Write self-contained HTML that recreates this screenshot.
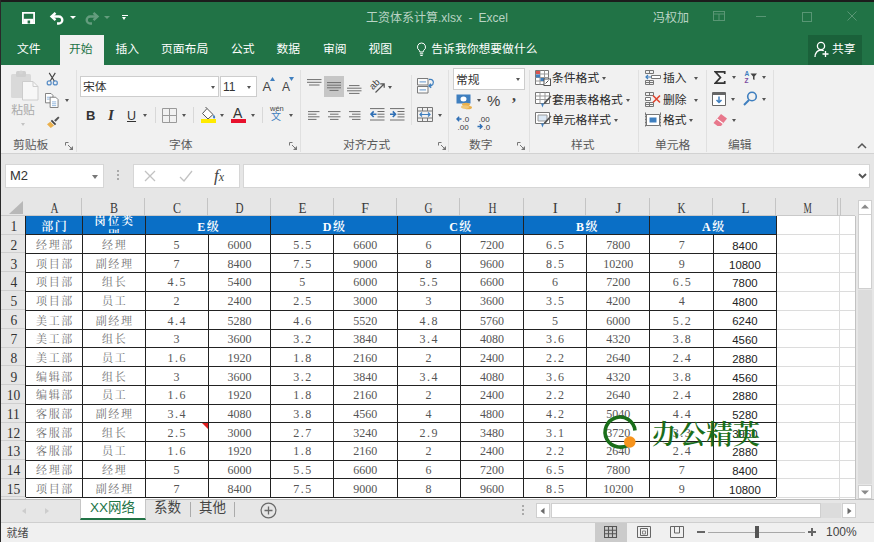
<!DOCTYPE html>
<html lang="zh-CN">
<head>
<meta charset="utf-8">
<title>工资体系计算.xlsx - Excel</title>
<style>
html,body{margin:0;padding:0;}
body{width:874px;height:542px;overflow:hidden;position:relative;background:#e6e6e6;font-family:"Liberation Sans","Noto Sans CJK SC",sans-serif;font-size:12px;color:#444;}
div,span,svg{position:absolute;box-sizing:border-box;}
.t{white-space:nowrap;line-height:14px;height:14px;}
/* title */
#title{left:0;top:0;width:874px;height:65px;background:#217346;}
#topb{left:0;top:0;width:874px;height:1.5px;background:#1c1c1c;}
#leftb{left:0;top:0;width:1px;height:542px;background:#2a2a2a;}
.w{color:#fff;}
.tab{top:42px;font-size:11.8px;color:#fff;}
#acttab{left:59.5px;top:35px;width:44.5px;height:31px;background:#f1f1f1;}
#share{left:808px;top:35px;width:54px;height:30px;background:#1a613a;}
/* ribbon */
#ribbon{left:1px;top:65px;width:873px;height:88.5px;background:#f1f1f1;border-bottom:1px solid #d2d2d2;}
.gs{top:70px;width:1px;height:82px;background:#e0e0e0;}
.ss{width:1px;height:16px;background:#d8d8d8;}
.gl2{top:137.5px;font-size:11.8px;color:#5a5a5a;}
.rt{font-size:11.8px;color:#2a2a2a;}
.box{background:#fff;border:1px solid #cdcdcd;height:21px;top:75.5px;}
.arr{width:0;height:0;border-left:2.5px solid transparent;border-right:2.5px solid transparent;border-top:3px solid #555;}
/* formula */
.fb{background:#fff;border:1px solid #d6d6d6;top:163.5px;height:24.5px;}
/* grid */
#sheet{left:1px;top:198px;width:853.5px;height:301px;background:#fff;}
#chbar{left:1px;top:198px;width:853.5px;height:17.7px;background:#e6e6e6;border-bottom:1px solid #c9c9c9;}
#rhbar{left:1px;top:215.7px;width:24.7px;height:283.3px;background:#e6e6e6;border-right:1px solid #c9c9c9;}
.ch{top:198px;height:18px;line-height:21px;padding-left:1.5px;text-align:center;font-family:"Liberation Serif","Noto Serif CJK SC",serif;font-size:15px;color:#3a3a3a;border-right:1px solid #c4c4c4;}
.ch b,.rh b{position:static;display:inline-block;font-weight:normal;transform:scaleX(.8);}
.rh b{transform:scaleX(.9);}
.c i{position:static;font-style:normal;padding:0 1.5px;}
.rh{left:1px;width:24.7px;text-align:center;font-family:"Liberation Serif","Noto Serif CJK SC",serif;font-size:15px;color:#333;border-bottom:1px solid #cfcfcf;}
.blue{background:#0a6fc6;}
.hd{color:#fff;font-weight:600;text-align:center;font-family:"Liberation Serif","Noto Serif CJK SC",serif;font-size:12px;overflow:hidden;letter-spacing:1.5px;padding-left:1.5px;}
.hd2{line-height:14px;margin-top:-2px;font-size:11.5px;letter-spacing:2.2px;padding-left:2.2px;}
.c{text-align:center;font-family:"Liberation Serif","Noto Serif CJK SC",serif;font-size:12px;color:#555;white-space:nowrap;}
.c.k{font-size:11px;color:#707070;letter-spacing:1.6px;padding-left:2px;}
.c.s{font-family:"Liberation Sans",sans-serif;color:#222;font-size:11.4px;letter-spacing:0;}
.vl{width:1px;background:#222;}
.hl{height:1px;background:#222;}
.gl{background:#dcdcdc;}
/* bottom */
#tabbar{left:1px;top:499px;width:873px;height:24px;background:#e6e6e6;border-top:1px solid #bdbdbd;border-bottom:1px solid #cfcfcf;}
#status{left:1px;top:523px;width:873px;height:19px;background:#f0f0f0;}
</style>
</head>
<body>
<div id="title"></div>
<div id="acttab"></div>
<div id="share"></div>
<div id="topb"></div>

<!-- quick access icons -->
<svg style="left:22px;top:12px" width="13" height="12" viewBox="0 0 13 12"><path d="M0.9 0.9h11.200v10.200h-11.200z" fill="none" stroke="#fff" stroke-width="1.800"/><rect x="1.500" y="6.800" width="10" height="4.500" fill="#fff"/><rect x="5.600" y="8.500" width="2.500" height="3" fill="#217346"/></svg>
<svg style="left:49px;top:10.500px" width="17" height="14" viewBox="0 0 17 14"><path d="M6.500 1.800 L2.500 5.500 L6.500 9.200" fill="none" stroke="#fff" stroke-width="2.400"/><path d="M3 5.500 H9.800 a3.500 3.500 0 0 1 0 7 H8" fill="none" stroke="#fff" stroke-width="2.400"/></svg>
<div class="arr" style="left:70px;top:16px;border-top-color:#fff;border-left-width:3px;border-right-width:3px"></div>
<svg style="left:83px;top:10.500px;opacity:.3" width="17" height="14" viewBox="0 0 17 14"><path d="M10.500 1.800 L14.500 5.500 L10.500 9.200" fill="none" stroke="#fff" stroke-width="2.400"/><path d="M14 5.500 H7.200 a3.500 3.500 0 0 0 0 7 H9" fill="none" stroke="#fff" stroke-width="2.400"/></svg>
<div class="arr" style="left:104px;top:16px;border-top-color:#fff;opacity:.3;border-left-width:3px;border-right-width:3px"></div>
<div style="left:122px;top:14.500px;width:5.500px;height:1.300px;background:#fff"></div>
<div class="arr" style="left:122.200px;top:17px;border-top-color:#fff"></div>

<!-- title text -->
<div class="t w" style="left:366px;top:10.5px;font-size:12px;color:#b9d3c4">工资体系计算.xlsx</div>
<div class="t w" style="left:468.5px;top:10.5px;font-size:12px;color:#b9d3c4">-</div>
<div class="t w" style="left:478.5px;top:10.5px;font-size:12px;color:#b9d3c4">Excel</div>
<div class="t w" style="left:653px;top:10.5px;font-size:12px;color:#b9d3c4">冯权加</div>
<svg style="left:713px;top:11px;opacity:.25" width="12" height="10" viewBox="0 0 12 10"><rect x=".5" y=".5" width="11" height="9" fill="none" stroke="#fff"/><path d="M.5 3h11M6 3v6" stroke="#fff" fill="none"/></svg>
<div style="left:756px;top:16px;width:10px;height:1px;background:#fff;opacity:.25"></div>
<div style="left:802px;top:11.5px;width:10px;height:10px;border:1px solid #fff;opacity:.25"></div>
<svg style="left:847px;top:11px;opacity:.25" width="10" height="10" viewBox="0 0 10 10"><path d="M.5 .5l9 9M9.5 .5l-9 9" stroke="#fff" fill="none"/></svg>

<!-- tabs -->
<div class="t tab" style="left:17px">文件</div>
<div class="t tab" style="left:69px;color:#217346">开始</div>
<div class="t tab" style="left:115.5px">插入</div>
<div class="t tab" style="left:161px">页面布局</div>
<div class="t tab" style="left:231px">公式</div>
<div class="t tab" style="left:276.5px">数据</div>
<div class="t tab" style="left:323px">审阅</div>
<div class="t tab" style="left:368.5px">视图</div>
<svg style="left:416px;top:41.5px" width="11" height="16" viewBox="0 0 11 16"><path d="M5.5 1a4 4 0 0 0-2.3 7.3c.4.4.6 1 .6 1.700h3.400c0-.7.200-1.300.6-1.700A4 4 0 0 0 5.500 1z" fill="none" stroke="#fff" stroke-width="1"/><path d="M3.800 11.800h3.400M4.300 13.500h2.400" stroke="#fff" stroke-width="1"/></svg>
<div class="t tab" style="left:431.3px">告诉我你想要做什么</div>
<svg style="left:814px;top:41px" width="16" height="17" viewBox="0 0 16 17"><circle cx="7" cy="5" r="3.600" fill="none" stroke="#fff" stroke-width="1.300"/><path d="M1 16c0-4 2.500-7 6-7 1 0 2 .3 2.700.8" fill="none" stroke="#fff" stroke-width="1.300"/><path d="M11.500 10v6M8.500 13h6" stroke="#fff" stroke-width="1.300"/></svg>
<div class="t tab" style="left:832px">共享</div>

<!-- ribbon -->
<div id="ribbon"></div>
<!-- clipboard group -->
<svg style="left:9px;top:69px" width="31" height="32" viewBox="0 0 31 32"><rect x="2" y="5" width="20" height="24" rx="1.500" fill="#d9d9d9"/><rect x="7" y="2" width="10" height="6" rx="1.500" fill="#cfcfcf"/><circle cx="12" cy="3.500" r="2" fill="#d4d4d4"/><path d="M13.500 12.500h10.500l5 5v13.500h-15.500z" fill="#f7f7f7" stroke="#cdcdcd" stroke-width="1"/><path d="M24 12.500v5h5" fill="none" stroke="#cdcdcd"/></svg>
<div class="t" style="left:11.300px;top:103px;font-size:11.800px;color:#aaa">粘贴</div>
<div class="arr" style="left:21px;top:123px;border-top-color:#c4c4c4"></div>
<svg style="left:45.500px;top:71.500px" width="12.500" height="14" viewBox="0 0 14 16"><path d="M3.500 1l6 9.500M10.500 1l-6 9.500" stroke="#444" stroke-width="1.300" fill="none"/><circle cx="3.500" cy="12.500" r="2.300" fill="none" stroke="#5b8fc7" stroke-width="1.400"/><circle cx="10.500" cy="12.500" r="2.300" fill="none" stroke="#5b8fc7" stroke-width="1.400"/></svg>
<svg style="left:45px;top:93px" width="14" height="15" viewBox="0 0 15 16"><path d="M.5 .5h6l2 2v8h-8z" fill="#fff" stroke="#7a7a7a"/><path d="M2 4.500h4M2 6.500h3" stroke="#8fb4dc"/><path d="M5.500 4.500h6l2.500 2.500v8.500h-8.500z" fill="#fff" stroke="#7a7a7a"/><path d="M7.500 9.500h4.500M7.500 11.500h4.500M7.500 13.500h4.500" stroke="#8fb4dc"/></svg>
<div class="arr" style="left:65px;top:99px"></div>
<svg style="left:45.500px;top:116px" width="14.500" height="12.500" viewBox="0 0 16 15"><path d="M9 5l5-4.500 1.500 1.500-4.500 5z" fill="#555"/><path d="M6.500 4.500l5 5-1.500 1.500-5-5z" fill="#444"/><path d="M4.500 7l4.500 4.500-4 3-4.500-4.500z" fill="#eab04c"/></svg>
<div class="t gl2" style="left:13px">剪贴板</div>
<svg class="ln" style="left:65px;top:142px" width="8" height="8" viewBox="0 0 8 8"><path d="M.5 3.500V.5H3.500M3 3l3.500 3.500" fill="none" stroke="#777" stroke-width="1"/><path d="M8 4v4H4z" fill="#777"/></svg>
<div class="gs" style="left:76px"></div>

<!-- font group -->
<div class="box" style="left:80px;width:139px"></div>
<div class="t" style="left:83px;top:80px;font-size:11.800px;color:#333">宋体</div>
<div class="arr" style="left:211px;top:86px"></div>
<div class="box" style="left:220px;width:37px"></div>
<div class="t" style="left:223px;top:80px;font-size:12px;color:#333">11</div>
<div class="arr" style="left:247px;top:86px"></div>
<div class="t" style="left:262.500px;top:78.500px;font-size:13px;color:#444;height:16px;line-height:16px">A</div>
<svg style="left:270px;top:77px" width="5" height="4" viewBox="0 0 5 4"><path d="M0 4l2.500-4 2.500 4z" fill="#3f7fbf"/></svg>
<div class="t" style="left:282px;top:80px;font-size:12px;color:#444">A</div>
<svg style="left:289px;top:77px" width="5" height="4" viewBox="0 0 5 4"><path d="M0 0l2.500 4 2.500-4z" fill="#3f7fbf"/></svg>
<div class="t" style="left:86px;top:108px;font-size:13px;font-weight:bold;color:#333;height:16px;line-height:16px">B</div>
<div class="t" style="left:108px;top:108px;font-size:15px;font-style:italic;font-weight:bold;color:#333;height:16px;line-height:15px;font-family:'Liberation Serif',serif">I</div>
<div class="t" style="left:127px;top:108px;font-size:12.500px;color:#333;height:16px;line-height:16px;text-decoration:underline">U</div>
<div class="arr" style="left:142.500px;top:114px"></div>
<div class="ss" style="left:155px;top:107px"></div>
<svg style="left:162px;top:108px" width="15" height="15" viewBox="0 0 15 15"><path d="M.5 .5h14v14H.5zM7.500 .5v14M.5 7.500h14" fill="none" stroke="#9a9a9a" stroke-width="1"/></svg>
<div class="arr" style="left:182px;top:114px"></div>
<div class="ss" style="left:193px;top:107px"></div>
<svg style="left:200px;top:106px" width="18" height="18" viewBox="0 0 18 18"><path d="M7 2.500l6 6-5 4.500-5.500-5.500z" fill="#fff" stroke="#555" stroke-width="1"/><path d="M7 2.500l-1.500-1.500" stroke="#555"/><path d="M13.500 8.500c1.500 1.500 2 2.500 1.500 3.500s-2 .5-2-1z" fill="#3f7fbf"/><rect x="1" y="13" width="15" height="4" fill="#ffeb00"/></svg>
<div class="arr" style="left:219.500px;top:114px"></div>
<div class="t" style="left:233px;top:105px;font-size:14px;color:#333;height:16px;line-height:16px">A</div>
<div style="left:231px;top:119px;width:15px;height:4px;background:#e8112d"></div>
<div class="arr" style="left:250.500px;top:114px"></div>
<div class="ss" style="left:262px;top:107px"></div>
<div class="t" style="left:270px;top:104px;font-size:7.500px;color:#444;height:9px;line-height:9px">wén</div>
<div class="t" style="left:271px;top:111px;font-size:10px;color:#3f7fbf;height:12px;line-height:12px">文</div>
<div class="arr" style="left:288.500px;top:114px"></div>
<div class="t gl2" style="left:169px">字体</div>
<svg style="left:289px;top:142px" width="8" height="8" viewBox="0 0 8 8"><path d="M.5 3.500V.5H3.500M3 3l3.500 3.500" fill="none" stroke="#777" stroke-width="1"/><path d="M8 4v4H4z" fill="#777"/></svg>
<div class="gs" style="left:300px"></div>

<!-- alignment group -->
<svg style="left:306.500px;top:78.500px" width="15" height="8" viewBox="0 0 15 8"><path d="M0 .6h14.500M0 3.300h14.500M2 6h10.500" stroke="#6e6e6e" stroke-width="1"/></svg>
<div style="left:324px;top:75.500px;width:20px;height:21px;background:#c6c6c6"></div>
<svg style="left:327px;top:82px" width="14" height="10" viewBox="0 0 14 10"><path d="M0 .6h14M0 3.200h14M0 5.800h14M2.500 8.400h9" stroke="#6e6e6e" stroke-width="1"/></svg>
<svg style="left:347px;top:85px" width="15" height="9" viewBox="0 0 15 9"><path d="M2 .6h10.500M0 3.200h14.500M0 5.800h14.500M2 8.400h10.500" stroke="#6e6e6e" stroke-width="1"/></svg>
<svg style="left:369px;top:77px" width="17" height="17" viewBox="0 0 17 17"><text x="0" y="0" font-size="9.500" font-family="'Liberation Sans',sans-serif" fill="#3a3a3a" transform="translate(4 13.200) rotate(-45)">ab</text><path d="M6.500 15.500l8.500-8.500M11.200 6.800h4v4" stroke="#555" stroke-width="1.200" fill="none"/></svg>
<div class="arr" style="left:388px;top:85.500px"></div>
<svg style="left:307.500px;top:110.500px" width="12" height="10" viewBox="0 0 12 10"><path d="M0 .6h11.500M0 3.200h8.500M0 5.800h11.500M0 8.400h8.500" stroke="#6e6e6e" stroke-width="1"/></svg>
<svg style="left:327.500px;top:110.500px" width="13" height="10" viewBox="0 0 13 10"><path d="M0 .6h12.500M2 3.200h8.500M0 5.800h12.500M2 8.400h8.500" stroke="#6e6e6e" stroke-width="1"/></svg>
<svg style="left:348.500px;top:110.500px" width="12" height="10" viewBox="0 0 12 10"><path d="M0 .6h11.500M3 3.200h8.500M0 5.800h11.500M3 8.400h8.500" stroke="#6e6e6e" stroke-width="1"/></svg>
<svg style="left:369.500px;top:108px" width="15" height="13" viewBox="0 0 15 13"><path d="M0 .6h14.500M7.500 3.500h7M7.500 6.200h7M7.500 8.900h7M0 12h14.500" stroke="#6e6e6e" stroke-width="1"/><path d="M6.500 6.200H1.200M3.700 3.400L1 6.200l2.700 2.800" stroke="#2f6fb5" stroke-width="1.600" fill="none"/></svg>
<svg style="left:390px;top:108px" width="15" height="13" viewBox="0 0 15 13"><path d="M0 .6h14.500M7.500 3.500h7M7.500 6.200h7M7.500 8.900h7M0 12h14.500" stroke="#6e6e6e" stroke-width="1"/><path d="M0 6.200h5.300M2.800 3.400l2.700 2.800-2.700 2.800" stroke="#2f6fb5" stroke-width="1.600" fill="none"/></svg>
<div class="ss" style="left:411px;top:75px;height:50px;background:#e0e0e0"></div>
<svg style="left:417px;top:78px" width="18" height="16" viewBox="0 0 18 16"><path d="M.5 .5h10.500v6.500H.5zM.5 8.500h10.500v6.500H.5z" fill="#fafafa" stroke="#7a7a7a"/><path d="M2.500 3.800h6.500M2.500 11.800h6.500" stroke="#7fa9d6" stroke-width="1.300"/><path d="M12 1.500c3.500-.8 5.500 2 3.800 4.800-.8 1.200-2 1.700-3.600 1.700M14 5.800l-2.200 2.200 2.400 1.800" stroke="#3f7fbf" stroke-width="1.300" fill="none"/></svg>
<svg style="left:417px;top:107px" width="16" height="15" viewBox="0 0 16 15"><path d="M.5 .5h15v14H.5zM.5 4h15M.5 11h15M5.500 .5v3.500M10.500 .5v3.500M5.500 11v3.500M10.500 11v3.500" fill="none" stroke="#777" stroke-width="1"/><path d="M3 7.500h10M5 5.500L3 7.500l2 2M11 5.500l2 2-2 2" stroke="#3f7fbf" stroke-width="1.200" fill="none"/></svg>
<div class="arr" style="left:437.500px;top:113.500px"></div>
<div class="t gl2" style="left:343px">对齐方式</div>
<svg style="left:438px;top:142px" width="8" height="8" viewBox="0 0 8 8"><path d="M.5 3.500V.5H3.500M3 3l3.500 3.500" fill="none" stroke="#777" stroke-width="1"/><path d="M8 4v4H4z" fill="#777"/></svg>
<div class="gs" style="left:448px"></div>

<!-- number group -->
<div class="box" style="left:453px;width:72px;top:68px;height:22px"></div>
<div class="t" style="left:456px;top:72.500px;font-size:11.800px;color:#333">常规</div>
<div class="arr" style="left:515.500px;top:78px"></div>
<svg style="left:455.5px;top:93.5px" width="18" height="16" viewBox="0 0 18 16"><rect x=".5" y=".5" width="14" height="9" fill="#3f7fbf"/><ellipse cx="7.500" cy="5" rx="3" ry="2.500" fill="#fff"/><ellipse cx="10" cy="10.500" rx="4" ry="1.800" fill="#eab04c"/><ellipse cx="12" cy="13.500" rx="4" ry="1.800" fill="#eab04c"/><ellipse cx="9" cy="13" rx="4" ry="1.800" fill="#f0c777"/></svg>
<div class="arr" style="left:477px;top:99px"></div>
<div class="t" style="left:487px;top:92px;font-size:15px;color:#444;height:17px;line-height:17px">%</div>
<div class="t" style="left:512px;top:86px;font-size:16px;font-weight:bold;color:#444;height:20px;line-height:20px;font-family:'Liberation Serif',serif">,</div>
<svg style="left:456px;top:115px" width="15" height="15" viewBox="0 0 15 15"><path d="M5.500 4H1M3.200 1.800L1 4l2.200 2.200" stroke="#2f6fb5" stroke-width="1.400" fill="none"/><text x="6.500" y="7" font-size="8" font-family="'Liberation Sans',sans-serif" fill="#3a3a3a">.0</text><text x="1.500" y="14.500" font-size="8" font-family="'Liberation Sans',sans-serif" fill="#3a3a3a">.00</text></svg>
<svg style="left:477px;top:115px" width="15" height="15" viewBox="0 0 15 15"><text x="1.500" y="7" font-size="8" font-family="'Liberation Sans',sans-serif" fill="#3a3a3a">.00</text><path d="M.5 11.500h4.500M2.800 9.300l2.200 2.200-2.200 2.200" stroke="#2f6fb5" stroke-width="1.400" fill="none"/><text x="6.500" y="14.500" font-size="8" font-family="'Liberation Sans',sans-serif" fill="#3a3a3a">.0</text></svg>
<div class="t gl2" style="left:469px">数字</div>
<svg style="left:517px;top:142px" width="8" height="8" viewBox="0 0 8 8"><path d="M.5 3.500V.5H3.500M3 3l3.500 3.500" fill="none" stroke="#777" stroke-width="1"/><path d="M8 4v4H4z" fill="#777"/></svg>
<div class="gs" style="left:529px"></div>

<!-- styles group -->
<svg style="left:535px;top:70px" width="16" height="16" viewBox="0 0 16 16"><path d="M.5 .5h13v14H.5z" fill="#fff" stroke="#777"/><path d="M.5 4h13M.5 7.500h13M.5 11h13M5 .5v14M9.500 .5v14" stroke="#999" fill="none"/><rect x="1" y="1" width="4" height="3" fill="#d9534f"/><rect x="1" y="4.500" width="4" height="3" fill="#3f7fbf"/><rect x="5.500" y="8" width="4" height="3" fill="#3f7fbf"/><rect x="9" y="9" width="6.500" height="6.500" fill="#fff" stroke="#555"/><path d="M10.500 13.500l3-3" stroke="#555"/></svg>
<div class="t rt" style="left:552px;top:71px">条件格式</div>
<div class="arr" style="left:602px;top:77px"></div>
<svg style="left:535px;top:92px" width="17" height="16" viewBox="0 0 17 16"><path d="M.5 .5h14v11H.5z" fill="#fff" stroke="#777"/><path d="M.5 4h14M.5 7.500h14M5 .5v11M10 .5v11" stroke="#999" fill="none"/><path d="M15.500 3.500l1 1-6 7-2 1 .5-2z" fill="#555"/><path d="M6 11.500l3 0 -1.500 4z" fill="#3f7fbf"/></svg>
<div class="t rt" style="left:552px;top:93px">套用表格格式</div>
<div class="arr" style="left:626px;top:99px"></div>
<svg style="left:535px;top:112px" width="17" height="16" viewBox="0 0 17 16"><path d="M.5 .5h14v11H.5z" fill="#fff" stroke="#777"/><path d="M3 3h9v6H3z" fill="#dbe8f5" stroke="#999"/><path d="M15.500 3.500l1 1-6 7-2 1 .5-2z" fill="#555"/><path d="M6 11.500l3 0 -1.500 4z" fill="#3f7fbf"/></svg>
<div class="t rt" style="left:552px;top:113px">单元格样式</div>
<div class="arr" style="left:614px;top:119px"></div>
<div class="t gl2" style="left:571px">样式</div>
<div class="gs" style="left:638px"></div>

<!-- cells group -->
<svg style="left:645px;top:70px" width="16" height="15" viewBox="0 0 16 15"><path d="M.5 .5h8v3h-8zM.5 10.500h8v4h-8zM4.500 .5v3M4.500 10.500v4M.5 12.500h8" fill="none" stroke="#777"/><path d="M6.500 5.500h9v3h-9z" fill="#fff" stroke="#777"/><path d="M6 7H1M3 5L1 7l2 2" stroke="#3f7fbf" stroke-width="1.200" fill="none"/></svg>
<div class="t rt" style="left:663px;top:71px">插入</div>
<div class="arr" style="left:694px;top:77px"></div>
<svg style="left:645px;top:92px" width="16" height="15" viewBox="0 0 16 15"><path d="M.5 .5h8v3h-8zM.5 10.500h8v4h-8zM4.500 .5v3M4.500 10.500v4M.5 12.500h8" fill="none" stroke="#777"/><path d="M.5 5.500h5v3h-5z" fill="#fff" stroke="#777"/><path d="M8 3.500l7 7M15 3.500l-7 7" stroke="#e0452f" stroke-width="1.600" fill="none"/></svg>
<div class="t rt" style="left:663px;top:93px">删除</div>
<div class="arr" style="left:694px;top:99px"></div>
<svg style="left:645px;top:112px" width="16" height="16" viewBox="0 0 16 16"><path d="M1.500 2.500h13v11h-13z" fill="#fff" stroke="#777"/><path d="M4.500 5.500h7v5h-7z" fill="#3f7fbf"/><path d="M.5 .5v15M15.500 .5v15M0 2.500h16M0 13.500h16" stroke="#777" fill="none" stroke-dasharray="2 1"/></svg>
<div class="t rt" style="left:663px;top:113px">格式</div>
<div class="arr" style="left:689px;top:119px"></div>
<div class="t gl2" style="left:655px">单元格</div>
<div class="gs" style="left:705.5px"></div>

<!-- editing group -->
<svg style="left:713.500px;top:71px" width="12" height="13" viewBox="0 0 14 15"><path d="M12.500 3.500V1H1.500l6 6.500-6 6.500h11v-2.500" fill="none" stroke="#333" stroke-width="2"/></svg>
<div class="arr" style="left:731.500px;top:76px"></div>
<svg style="left:743px;top:69px" width="15" height="16" viewBox="0 0 15 16"><text x="1.500" y="7" font-size="6.500" font-family="'Liberation Sans',sans-serif" fill="#3f7fbf" font-weight="bold">A</text><text x="1.500" y="13.500" font-size="6.500" font-family="'Liberation Sans',sans-serif" fill="#7a4aa0" font-weight="bold">Z</text><path d="M7.500 4.500h6.500l-2.500 3v3.500l-1.500-.8v-2.700z" fill="#444"/></svg>
<div class="arr" style="left:761.500px;top:76px"></div>
<svg style="left:712.300px;top:91.500px" width="14" height="14" viewBox="0 0 14 14"><path d="M.5 .5h13v13H.5z" fill="#fff" stroke="#666"/><path d="M.5 2h13" stroke="#666" stroke-width="2"/><path d="M7 4.500v6M4.500 8L7 10.500 9.500 8" stroke="#3f7fbf" stroke-width="1.500" fill="none"/></svg>
<div class="arr" style="left:731px;top:97.500px"></div>
<svg style="left:743px;top:91px" width="15" height="15" viewBox="0 0 15 15"><circle cx="9" cy="5.500" r="4.300" fill="none" stroke="#3f7fbf" stroke-width="1.600"/><path d="M6 9l-5 5" stroke="#3f7fbf" stroke-width="2"/></svg>
<div class="arr" style="left:761.500px;top:97.500px"></div>
<svg style="left:712px;top:113px" width="16" height="14" viewBox="0 0 16 14"><path d="M9 1l6 4.500-6 7.500h-3.500l-4-3z" fill="#e8788c"/><path d="M5 6l6 4.500" stroke="#fff" stroke-width="1.200"/></svg>
<div class="arr" style="left:731.500px;top:119px"></div>
<div class="t gl2" style="left:728px">编辑</div>
<div class="gs" style="left:773px"></div>
<svg style="left:857px;top:142px" width="10" height="7" viewBox="0 0 10 7"><path d="M1 6l4-4 4 4" stroke="#555" stroke-width="1.500" fill="none"/></svg>


<!-- formula bar -->
<div class="fb" style="left:5px;width:99px"></div>
<div class="t" style="left:10px;top:169px;font-size:13px;color:#333">M2</div>
<div class="arr" style="left:91.500px;top:174.500px;border-top-color:#777;border-left-width:3.500px;border-right-width:3.500px;border-top-width:4px"></div>
<div style="left:117px;top:170px;width:2px;height:2px;background:#aaa;box-shadow:0 4px 0 #aaa,0 8px 0 #aaa"></div>
<div class="fb" style="left:133px;width:107px"></div>
<svg style="left:144px;top:170px" width="12" height="12" viewBox="0 0 12 12"><path d="M1 1l10 10M11 1L1 11" stroke="#c2c2c2" stroke-width="1.300" fill="none"/></svg>
<svg style="left:179px;top:170px" width="14" height="12" viewBox="0 0 14 12"><path d="M1 7l4 4L13 1" stroke="#c2c2c2" stroke-width="1.300" fill="none"/></svg>
<div class="t" style="left:214px;top:167px;font-family:'Liberation Serif',serif;font-style:italic;font-size:17px;color:#444;height:18px;line-height:18px">f<span style="position:relative;font-size:12px">x</span></div>
<div class="fb" style="left:243px;width:627px"></div>
<svg style="left:857.500px;top:173px" width="9" height="6" viewBox="0 0 9 6"><path d="M1 1l3.500 3.500 3.500-3.500" stroke="#555" stroke-width="1.900" fill="none"/></svg>

<!-- sheet -->
<div id="sheet"></div>
<div id="chbar"></div>
<div id="rhbar"></div>
<svg style="left:9px;top:201px" width="15" height="13" viewBox="0 0 15 13"><path d="M14 0v13H0z" fill="#b8b8b8"/></svg>
<div class="ch" style="left:25.7px;width:56.5px"><b style="transform:scaleX(0.74)">A</b></div>
<div class="ch" style="left:82.2px;width:62.9px"><b style="transform:scaleX(0.8)">B</b></div>
<div class="ch" style="left:145.1px;width:62.9px"><b style="transform:scaleX(0.8)">C</b></div>
<div class="ch" style="left:208px;width:62.8px"><b style="transform:scaleX(0.74)">D</b></div>
<div class="ch" style="left:270.8px;width:62.9px"><b style="transform:scaleX(0.87)">E</b></div>
<div class="ch" style="left:333.7px;width:63.3px"><b style="transform:scaleX(0.93)">F</b></div>
<div class="ch" style="left:397px;width:63.2px"><b style="transform:scaleX(0.74)">G</b></div>
<div class="ch" style="left:460.2px;width:63.4px"><b style="transform:scaleX(0.74)">H</b></div>
<div class="ch" style="left:523.6px;width:62.9px"><b style="transform:scaleX(1)">I</b></div>
<div class="ch" style="left:586.5px;width:63.4px"><b style="transform:scaleX(1)">J</b></div>
<div class="ch" style="left:649.9px;width:63.5px"><b style="transform:scaleX(0.74)">K</b></div>
<div class="ch" style="left:713.4px;width:63.1px"><b style="transform:scaleX(0.87)">L</b></div>
<div class="ch" style="left:776.5px;width:61.0px"><b style="transform:scaleX(0.62)">M</b></div>
<div class="rh" style="top:215.7px;height:19.1px;line-height:21.6px"><b>1</b></div>
<div class="rh" style="top:234.8px;height:18.7px;line-height:21.2px"><b>2</b></div>
<div class="rh" style="top:253.5px;height:18.8px;line-height:21.3px"><b>3</b></div>
<div class="rh" style="top:272.3px;height:18.9px;line-height:21.4px"><b>4</b></div>
<div class="rh" style="top:291.2px;height:18.8px;line-height:21.3px"><b>5</b></div>
<div class="rh" style="top:310px;height:19px;line-height:21.5px"><b>6</b></div>
<div class="rh" style="top:329px;height:18.7px;line-height:21.2px"><b>7</b></div>
<div class="rh" style="top:347.7px;height:18.8px;line-height:21.3px"><b>8</b></div>
<div class="rh" style="top:366.5px;height:18.8px;line-height:21.3px"><b>9</b></div>
<div class="rh" style="top:385.3px;height:18.7px;line-height:21.2px"><b>10</b></div>
<div class="rh" style="top:404px;height:18.7px;line-height:21.2px"><b>11</b></div>
<div class="rh" style="top:422.7px;height:18.7px;line-height:21.2px"><b>12</b></div>
<div class="rh" style="top:441.4px;height:18.6px;line-height:21.1px"><b>13</b></div>
<div class="rh" style="top:460px;height:18.7px;line-height:21.2px"><b>14</b></div>
<div class="rh" style="top:478.7px;height:18.6px;line-height:21.1px"><b>15</b></div>
<div class="blue" style="left:25.7px;top:215.7px;width:750.8px;height:19.1px"></div>
<div class="hd" style="left:25.7px;width:56.5px;top:215.7px;height:19.1px;line-height:22.1px;">部门</div>
<div class="hd hd2" style="left:82.2px;width:62.9px;top:215.7px;height:19.1px;">岗位类<br>别</div>
<div class="hd" style="left:145.1px;width:125.7px;top:215.7px;height:19.1px;line-height:22.1px;">E级</div>
<div class="hd" style="left:270.8px;width:126.2px;top:215.7px;height:19.1px;line-height:22.1px;">D级</div>
<div class="hd" style="left:397px;width:126.6px;top:215.7px;height:19.1px;line-height:22.1px;">C级</div>
<div class="hd" style="left:523.6px;width:126.3px;top:215.7px;height:19.1px;line-height:22.1px;">B级</div>
<div class="hd" style="left:649.9px;width:126.6px;top:215.7px;height:19.1px;line-height:22.1px;">A级</div>
<div class="c k" style="left:25.7px;top:234.8px;width:56.5px;height:18.7px;line-height:21.7px">经理部</div>
<div class="c k" style="left:82.2px;top:234.8px;width:62.9px;height:18.7px;line-height:21.7px">经理</div>
<div class="c" style="left:145.1px;top:234.8px;width:62.9px;height:18.7px;line-height:21.7px">5</div>
<div class="c" style="left:208px;top:234.8px;width:62.8px;height:18.7px;line-height:21.7px">6000</div>
<div class="c" style="left:270.8px;top:234.8px;width:62.9px;height:18.7px;line-height:21.7px">5<i>.</i>5</div>
<div class="c" style="left:333.7px;top:234.8px;width:63.3px;height:18.7px;line-height:21.7px">6600</div>
<div class="c" style="left:397px;top:234.8px;width:63.2px;height:18.7px;line-height:21.7px">6</div>
<div class="c" style="left:460.2px;top:234.8px;width:63.4px;height:18.7px;line-height:21.7px">7200</div>
<div class="c" style="left:523.6px;top:234.8px;width:62.9px;height:18.7px;line-height:21.7px">6<i>.</i>5</div>
<div class="c" style="left:586.5px;top:234.8px;width:63.4px;height:18.7px;line-height:21.7px">7800</div>
<div class="c" style="left:649.9px;top:234.8px;width:63.5px;height:18.7px;line-height:21.7px">7</div>
<div class="c s" style="left:713.4px;top:234.8px;width:63.1px;height:18.7px;line-height:22.2px">8400</div>
<div class="c k" style="left:25.7px;top:253.5px;width:56.5px;height:18.8px;line-height:21.8px">项目部</div>
<div class="c k" style="left:82.2px;top:253.5px;width:62.9px;height:18.8px;line-height:21.8px">副经理</div>
<div class="c" style="left:145.1px;top:253.5px;width:62.9px;height:18.8px;line-height:21.8px">7</div>
<div class="c" style="left:208px;top:253.5px;width:62.8px;height:18.8px;line-height:21.8px">8400</div>
<div class="c" style="left:270.8px;top:253.5px;width:62.9px;height:18.8px;line-height:21.8px">7<i>.</i>5</div>
<div class="c" style="left:333.7px;top:253.5px;width:63.3px;height:18.8px;line-height:21.8px">9000</div>
<div class="c" style="left:397px;top:253.5px;width:63.2px;height:18.8px;line-height:21.8px">8</div>
<div class="c" style="left:460.2px;top:253.5px;width:63.4px;height:18.8px;line-height:21.8px">9600</div>
<div class="c" style="left:523.6px;top:253.5px;width:62.9px;height:18.8px;line-height:21.8px">8<i>.</i>5</div>
<div class="c" style="left:586.5px;top:253.5px;width:63.4px;height:18.8px;line-height:21.8px">10200</div>
<div class="c" style="left:649.9px;top:253.5px;width:63.5px;height:18.8px;line-height:21.8px">9</div>
<div class="c s" style="left:713.4px;top:253.5px;width:63.1px;height:18.8px;line-height:22.3px">10800</div>
<div class="c k" style="left:25.7px;top:272.3px;width:56.5px;height:18.9px;line-height:21.9px">项目部</div>
<div class="c k" style="left:82.2px;top:272.3px;width:62.9px;height:18.9px;line-height:21.9px">组长</div>
<div class="c" style="left:145.1px;top:272.3px;width:62.9px;height:18.9px;line-height:21.9px">4<i>.</i>5</div>
<div class="c" style="left:208px;top:272.3px;width:62.8px;height:18.9px;line-height:21.9px">5400</div>
<div class="c" style="left:270.8px;top:272.3px;width:62.9px;height:18.9px;line-height:21.9px">5</div>
<div class="c" style="left:333.7px;top:272.3px;width:63.3px;height:18.9px;line-height:21.9px">6000</div>
<div class="c" style="left:397px;top:272.3px;width:63.2px;height:18.9px;line-height:21.9px">5<i>.</i>5</div>
<div class="c" style="left:460.2px;top:272.3px;width:63.4px;height:18.9px;line-height:21.9px">6600</div>
<div class="c" style="left:523.6px;top:272.3px;width:62.9px;height:18.9px;line-height:21.9px">6</div>
<div class="c" style="left:586.5px;top:272.3px;width:63.4px;height:18.9px;line-height:21.9px">7200</div>
<div class="c" style="left:649.9px;top:272.3px;width:63.5px;height:18.9px;line-height:21.9px">6<i>.</i>5</div>
<div class="c s" style="left:713.4px;top:272.3px;width:63.1px;height:18.9px;line-height:22.4px">7800</div>
<div class="c k" style="left:25.7px;top:291.2px;width:56.5px;height:18.8px;line-height:21.8px">项目部</div>
<div class="c k" style="left:82.2px;top:291.2px;width:62.9px;height:18.8px;line-height:21.8px">员工</div>
<div class="c" style="left:145.1px;top:291.2px;width:62.9px;height:18.8px;line-height:21.8px">2</div>
<div class="c" style="left:208px;top:291.2px;width:62.8px;height:18.8px;line-height:21.8px">2400</div>
<div class="c" style="left:270.8px;top:291.2px;width:62.9px;height:18.8px;line-height:21.8px">2<i>.</i>5</div>
<div class="c" style="left:333.7px;top:291.2px;width:63.3px;height:18.8px;line-height:21.8px">3000</div>
<div class="c" style="left:397px;top:291.2px;width:63.2px;height:18.8px;line-height:21.8px">3</div>
<div class="c" style="left:460.2px;top:291.2px;width:63.4px;height:18.8px;line-height:21.8px">3600</div>
<div class="c" style="left:523.6px;top:291.2px;width:62.9px;height:18.8px;line-height:21.8px">3<i>.</i>5</div>
<div class="c" style="left:586.5px;top:291.2px;width:63.4px;height:18.8px;line-height:21.8px">4200</div>
<div class="c" style="left:649.9px;top:291.2px;width:63.5px;height:18.8px;line-height:21.8px">4</div>
<div class="c s" style="left:713.4px;top:291.2px;width:63.1px;height:18.8px;line-height:22.3px">4800</div>
<div class="c k" style="left:25.7px;top:310px;width:56.5px;height:19px;line-height:22px">美工部</div>
<div class="c k" style="left:82.2px;top:310px;width:62.9px;height:19px;line-height:22px">副经理</div>
<div class="c" style="left:145.1px;top:310px;width:62.9px;height:19px;line-height:22px">4<i>.</i>4</div>
<div class="c" style="left:208px;top:310px;width:62.8px;height:19px;line-height:22px">5280</div>
<div class="c" style="left:270.8px;top:310px;width:62.9px;height:19px;line-height:22px">4<i>.</i>6</div>
<div class="c" style="left:333.7px;top:310px;width:63.3px;height:19px;line-height:22px">5520</div>
<div class="c" style="left:397px;top:310px;width:63.2px;height:19px;line-height:22px">4<i>.</i>8</div>
<div class="c" style="left:460.2px;top:310px;width:63.4px;height:19px;line-height:22px">5760</div>
<div class="c" style="left:523.6px;top:310px;width:62.9px;height:19px;line-height:22px">5</div>
<div class="c" style="left:586.5px;top:310px;width:63.4px;height:19px;line-height:22px">6000</div>
<div class="c" style="left:649.9px;top:310px;width:63.5px;height:19px;line-height:22px">5<i>.</i>2</div>
<div class="c s" style="left:713.4px;top:310px;width:63.1px;height:19px;line-height:22.5px">6240</div>
<div class="c k" style="left:25.7px;top:329px;width:56.5px;height:18.7px;line-height:21.7px">美工部</div>
<div class="c k" style="left:82.2px;top:329px;width:62.9px;height:18.7px;line-height:21.7px">组长</div>
<div class="c" style="left:145.1px;top:329px;width:62.9px;height:18.7px;line-height:21.7px">3</div>
<div class="c" style="left:208px;top:329px;width:62.8px;height:18.7px;line-height:21.7px">3600</div>
<div class="c" style="left:270.8px;top:329px;width:62.9px;height:18.7px;line-height:21.7px">3<i>.</i>2</div>
<div class="c" style="left:333.7px;top:329px;width:63.3px;height:18.7px;line-height:21.7px">3840</div>
<div class="c" style="left:397px;top:329px;width:63.2px;height:18.7px;line-height:21.7px">3<i>.</i>4</div>
<div class="c" style="left:460.2px;top:329px;width:63.4px;height:18.7px;line-height:21.7px">4080</div>
<div class="c" style="left:523.6px;top:329px;width:62.9px;height:18.7px;line-height:21.7px">3<i>.</i>6</div>
<div class="c" style="left:586.5px;top:329px;width:63.4px;height:18.7px;line-height:21.7px">4320</div>
<div class="c" style="left:649.9px;top:329px;width:63.5px;height:18.7px;line-height:21.7px">3<i>.</i>8</div>
<div class="c s" style="left:713.4px;top:329px;width:63.1px;height:18.7px;line-height:22.2px">4560</div>
<div class="c k" style="left:25.7px;top:347.7px;width:56.5px;height:18.8px;line-height:21.8px">美工部</div>
<div class="c k" style="left:82.2px;top:347.7px;width:62.9px;height:18.8px;line-height:21.8px">员工</div>
<div class="c" style="left:145.1px;top:347.7px;width:62.9px;height:18.8px;line-height:21.8px">1<i>.</i>6</div>
<div class="c" style="left:208px;top:347.7px;width:62.8px;height:18.8px;line-height:21.8px">1920</div>
<div class="c" style="left:270.8px;top:347.7px;width:62.9px;height:18.8px;line-height:21.8px">1<i>.</i>8</div>
<div class="c" style="left:333.7px;top:347.7px;width:63.3px;height:18.8px;line-height:21.8px">2160</div>
<div class="c" style="left:397px;top:347.7px;width:63.2px;height:18.8px;line-height:21.8px">2</div>
<div class="c" style="left:460.2px;top:347.7px;width:63.4px;height:18.8px;line-height:21.8px">2400</div>
<div class="c" style="left:523.6px;top:347.7px;width:62.9px;height:18.8px;line-height:21.8px">2<i>.</i>2</div>
<div class="c" style="left:586.5px;top:347.7px;width:63.4px;height:18.8px;line-height:21.8px">2640</div>
<div class="c" style="left:649.9px;top:347.7px;width:63.5px;height:18.8px;line-height:21.8px">2<i>.</i>4</div>
<div class="c s" style="left:713.4px;top:347.7px;width:63.1px;height:18.8px;line-height:22.3px">2880</div>
<div class="c k" style="left:25.7px;top:366.5px;width:56.5px;height:18.8px;line-height:21.8px">编辑部</div>
<div class="c k" style="left:82.2px;top:366.5px;width:62.9px;height:18.8px;line-height:21.8px">组长</div>
<div class="c" style="left:145.1px;top:366.5px;width:62.9px;height:18.8px;line-height:21.8px">3</div>
<div class="c" style="left:208px;top:366.5px;width:62.8px;height:18.8px;line-height:21.8px">3600</div>
<div class="c" style="left:270.8px;top:366.5px;width:62.9px;height:18.8px;line-height:21.8px">3<i>.</i>2</div>
<div class="c" style="left:333.7px;top:366.5px;width:63.3px;height:18.8px;line-height:21.8px">3840</div>
<div class="c" style="left:397px;top:366.5px;width:63.2px;height:18.8px;line-height:21.8px">3<i>.</i>4</div>
<div class="c" style="left:460.2px;top:366.5px;width:63.4px;height:18.8px;line-height:21.8px">4080</div>
<div class="c" style="left:523.6px;top:366.5px;width:62.9px;height:18.8px;line-height:21.8px">3<i>.</i>6</div>
<div class="c" style="left:586.5px;top:366.5px;width:63.4px;height:18.8px;line-height:21.8px">4320</div>
<div class="c" style="left:649.9px;top:366.5px;width:63.5px;height:18.8px;line-height:21.8px">3<i>.</i>8</div>
<div class="c s" style="left:713.4px;top:366.5px;width:63.1px;height:18.8px;line-height:22.3px">4560</div>
<div class="c k" style="left:25.7px;top:385.3px;width:56.5px;height:18.7px;line-height:21.7px">编辑部</div>
<div class="c k" style="left:82.2px;top:385.3px;width:62.9px;height:18.7px;line-height:21.7px">员工</div>
<div class="c" style="left:145.1px;top:385.3px;width:62.9px;height:18.7px;line-height:21.7px">1<i>.</i>6</div>
<div class="c" style="left:208px;top:385.3px;width:62.8px;height:18.7px;line-height:21.7px">1920</div>
<div class="c" style="left:270.8px;top:385.3px;width:62.9px;height:18.7px;line-height:21.7px">1<i>.</i>8</div>
<div class="c" style="left:333.7px;top:385.3px;width:63.3px;height:18.7px;line-height:21.7px">2160</div>
<div class="c" style="left:397px;top:385.3px;width:63.2px;height:18.7px;line-height:21.7px">2</div>
<div class="c" style="left:460.2px;top:385.3px;width:63.4px;height:18.7px;line-height:21.7px">2400</div>
<div class="c" style="left:523.6px;top:385.3px;width:62.9px;height:18.7px;line-height:21.7px">2<i>.</i>2</div>
<div class="c" style="left:586.5px;top:385.3px;width:63.4px;height:18.7px;line-height:21.7px">2640</div>
<div class="c" style="left:649.9px;top:385.3px;width:63.5px;height:18.7px;line-height:21.7px">2<i>.</i>4</div>
<div class="c s" style="left:713.4px;top:385.3px;width:63.1px;height:18.7px;line-height:22.2px">2880</div>
<div class="c k" style="left:25.7px;top:404px;width:56.5px;height:18.7px;line-height:21.7px">客服部</div>
<div class="c k" style="left:82.2px;top:404px;width:62.9px;height:18.7px;line-height:21.7px">副经理</div>
<div class="c" style="left:145.1px;top:404px;width:62.9px;height:18.7px;line-height:21.7px">3<i>.</i>4</div>
<div class="c" style="left:208px;top:404px;width:62.8px;height:18.7px;line-height:21.7px">4080</div>
<div class="c" style="left:270.8px;top:404px;width:62.9px;height:18.7px;line-height:21.7px">3<i>.</i>8</div>
<div class="c" style="left:333.7px;top:404px;width:63.3px;height:18.7px;line-height:21.7px">4560</div>
<div class="c" style="left:397px;top:404px;width:63.2px;height:18.7px;line-height:21.7px">4</div>
<div class="c" style="left:460.2px;top:404px;width:63.4px;height:18.7px;line-height:21.7px">4800</div>
<div class="c" style="left:523.6px;top:404px;width:62.9px;height:18.7px;line-height:21.7px">4<i>.</i>2</div>
<div class="c" style="left:586.5px;top:404px;width:63.4px;height:18.7px;line-height:21.7px">5040</div>
<div class="c" style="left:649.9px;top:404px;width:63.5px;height:18.7px;line-height:21.7px">4<i>.</i>4</div>
<div class="c s" style="left:713.4px;top:404px;width:63.1px;height:18.7px;line-height:22.2px">5280</div>
<div class="c k" style="left:25.7px;top:422.7px;width:56.5px;height:18.7px;line-height:21.7px">客服部</div>
<div class="c k" style="left:82.2px;top:422.7px;width:62.9px;height:18.7px;line-height:21.7px">组长</div>
<div class="c" style="left:145.1px;top:422.7px;width:62.9px;height:18.7px;line-height:21.7px">2<i>.</i>5</div>
<div class="c" style="left:208px;top:422.7px;width:62.8px;height:18.7px;line-height:21.7px">3000</div>
<div class="c" style="left:270.8px;top:422.7px;width:62.9px;height:18.7px;line-height:21.7px">2<i>.</i>7</div>
<div class="c" style="left:333.7px;top:422.7px;width:63.3px;height:18.7px;line-height:21.7px">3240</div>
<div class="c" style="left:397px;top:422.7px;width:63.2px;height:18.7px;line-height:21.7px">2<i>.</i>9</div>
<div class="c" style="left:460.2px;top:422.7px;width:63.4px;height:18.7px;line-height:21.7px">3480</div>
<div class="c" style="left:523.6px;top:422.7px;width:62.9px;height:18.7px;line-height:21.7px">3<i>.</i>1</div>
<div class="c" style="left:586.5px;top:422.7px;width:63.4px;height:18.7px;line-height:21.7px">3720</div>
<div class="c" style="left:649.9px;top:422.7px;width:63.5px;height:18.7px;line-height:21.7px">3<i>.</i>3</div>
<div class="c s" style="left:713.4px;top:422.7px;width:63.1px;height:18.7px;line-height:22.2px">3960</div>
<div class="c k" style="left:25.7px;top:441.4px;width:56.5px;height:18.6px;line-height:21.6px">客服部</div>
<div class="c k" style="left:82.2px;top:441.4px;width:62.9px;height:18.6px;line-height:21.6px">员工</div>
<div class="c" style="left:145.1px;top:441.4px;width:62.9px;height:18.6px;line-height:21.6px">1<i>.</i>6</div>
<div class="c" style="left:208px;top:441.4px;width:62.8px;height:18.6px;line-height:21.6px">1920</div>
<div class="c" style="left:270.8px;top:441.4px;width:62.9px;height:18.6px;line-height:21.6px">1<i>.</i>8</div>
<div class="c" style="left:333.7px;top:441.4px;width:63.3px;height:18.6px;line-height:21.6px">2160</div>
<div class="c" style="left:397px;top:441.4px;width:63.2px;height:18.6px;line-height:21.6px">2</div>
<div class="c" style="left:460.2px;top:441.4px;width:63.4px;height:18.6px;line-height:21.6px">2400</div>
<div class="c" style="left:523.6px;top:441.4px;width:62.9px;height:18.6px;line-height:21.6px">2<i>.</i>2</div>
<div class="c" style="left:586.5px;top:441.4px;width:63.4px;height:18.6px;line-height:21.6px">2640</div>
<div class="c" style="left:649.9px;top:441.4px;width:63.5px;height:18.6px;line-height:21.6px">2<i>.</i>4</div>
<div class="c s" style="left:713.4px;top:441.4px;width:63.1px;height:18.6px;line-height:22.1px">2880</div>
<div class="c k" style="left:25.7px;top:460px;width:56.5px;height:18.7px;line-height:21.7px">经理部</div>
<div class="c k" style="left:82.2px;top:460px;width:62.9px;height:18.7px;line-height:21.7px">经理</div>
<div class="c" style="left:145.1px;top:460px;width:62.9px;height:18.7px;line-height:21.7px">5</div>
<div class="c" style="left:208px;top:460px;width:62.8px;height:18.7px;line-height:21.7px">6000</div>
<div class="c" style="left:270.8px;top:460px;width:62.9px;height:18.7px;line-height:21.7px">5<i>.</i>5</div>
<div class="c" style="left:333.7px;top:460px;width:63.3px;height:18.7px;line-height:21.7px">6600</div>
<div class="c" style="left:397px;top:460px;width:63.2px;height:18.7px;line-height:21.7px">6</div>
<div class="c" style="left:460.2px;top:460px;width:63.4px;height:18.7px;line-height:21.7px">7200</div>
<div class="c" style="left:523.6px;top:460px;width:62.9px;height:18.7px;line-height:21.7px">6<i>.</i>5</div>
<div class="c" style="left:586.5px;top:460px;width:63.4px;height:18.7px;line-height:21.7px">7800</div>
<div class="c" style="left:649.9px;top:460px;width:63.5px;height:18.7px;line-height:21.7px">7</div>
<div class="c s" style="left:713.4px;top:460px;width:63.1px;height:18.7px;line-height:22.2px">8400</div>
<div class="c k" style="left:25.7px;top:478.7px;width:56.5px;height:18.6px;line-height:21.6px">项目部</div>
<div class="c k" style="left:82.2px;top:478.7px;width:62.9px;height:18.6px;line-height:21.6px">副经理</div>
<div class="c" style="left:145.1px;top:478.7px;width:62.9px;height:18.6px;line-height:21.6px">7</div>
<div class="c" style="left:208px;top:478.7px;width:62.8px;height:18.6px;line-height:21.6px">8400</div>
<div class="c" style="left:270.8px;top:478.7px;width:62.9px;height:18.6px;line-height:21.6px">7<i>.</i>5</div>
<div class="c" style="left:333.7px;top:478.7px;width:63.3px;height:18.6px;line-height:21.6px">9000</div>
<div class="c" style="left:397px;top:478.7px;width:63.2px;height:18.6px;line-height:21.6px">8</div>
<div class="c" style="left:460.2px;top:478.7px;width:63.4px;height:18.6px;line-height:21.6px">9600</div>
<div class="c" style="left:523.6px;top:478.7px;width:62.9px;height:18.6px;line-height:21.6px">8<i>.</i>5</div>
<div class="c" style="left:586.5px;top:478.7px;width:63.4px;height:18.6px;line-height:21.6px">10200</div>
<div class="c" style="left:649.9px;top:478.7px;width:63.5px;height:18.6px;line-height:21.6px">9</div>
<div class="c s" style="left:713.4px;top:478.7px;width:63.1px;height:18.6px;line-height:22.1px">10800</div>
<div class="vl" style="left:25.2px;top:215.7px;height:281.6px"></div>
<div class="vl" style="left:81.7px;top:215.7px;height:281.6px"></div>
<div class="vl" style="left:144.6px;top:215.7px;height:281.6px"></div>
<div class="vl" style="left:207.5px;top:234.8px;height:262.5px"></div>
<div class="vl" style="left:270.3px;top:215.7px;height:281.6px"></div>
<div class="vl" style="left:333.2px;top:234.8px;height:262.5px"></div>
<div class="vl" style="left:396.5px;top:215.7px;height:281.6px"></div>
<div class="vl" style="left:459.7px;top:234.8px;height:262.5px"></div>
<div class="vl" style="left:523.1px;top:215.7px;height:281.6px"></div>
<div class="vl" style="left:586.0px;top:234.8px;height:262.5px"></div>
<div class="vl" style="left:649.4px;top:215.7px;height:281.6px"></div>
<div class="vl" style="left:712.9px;top:234.8px;height:262.5px"></div>
<div class="vl" style="left:776.0px;top:215.7px;height:281.6px"></div>
<div class="hl" style="left:25.7px;top:234.3px;width:750.8px"></div>
<div class="hl" style="left:25.7px;top:253.0px;width:750.8px"></div>
<div class="hl" style="left:25.7px;top:271.8px;width:750.8px"></div>
<div class="hl" style="left:25.7px;top:290.7px;width:750.8px"></div>
<div class="hl" style="left:25.7px;top:309.5px;width:750.8px"></div>
<div class="hl" style="left:25.7px;top:328.5px;width:750.8px"></div>
<div class="hl" style="left:25.7px;top:347.2px;width:750.8px"></div>
<div class="hl" style="left:25.7px;top:366.0px;width:750.8px"></div>
<div class="hl" style="left:25.7px;top:384.8px;width:750.8px"></div>
<div class="hl" style="left:25.7px;top:403.5px;width:750.8px"></div>
<div class="hl" style="left:25.7px;top:422.2px;width:750.8px"></div>
<div class="hl" style="left:25.7px;top:440.9px;width:750.8px"></div>
<div class="hl" style="left:25.7px;top:459.5px;width:750.8px"></div>
<div class="hl" style="left:25.7px;top:478.2px;width:750.8px"></div>
<div class="hl" style="left:25.7px;top:496.8px;width:750.8px"></div>
<div class="gl" style="left:776.5px;top:234.3px;width:78.0px;height:1px"></div>
<div class="gl" style="left:776.5px;top:253.0px;width:78.0px;height:1px"></div>
<div class="gl" style="left:776.5px;top:271.8px;width:78.0px;height:1px"></div>
<div class="gl" style="left:776.5px;top:290.7px;width:78.0px;height:1px"></div>
<div class="gl" style="left:776.5px;top:309.5px;width:78.0px;height:1px"></div>
<div class="gl" style="left:776.5px;top:328.5px;width:78.0px;height:1px"></div>
<div class="gl" style="left:776.5px;top:347.2px;width:78.0px;height:1px"></div>
<div class="gl" style="left:776.5px;top:366.0px;width:78.0px;height:1px"></div>
<div class="gl" style="left:776.5px;top:384.8px;width:78.0px;height:1px"></div>
<div class="gl" style="left:776.5px;top:403.5px;width:78.0px;height:1px"></div>
<div class="gl" style="left:776.5px;top:422.2px;width:78.0px;height:1px"></div>
<div class="gl" style="left:776.5px;top:440.9px;width:78.0px;height:1px"></div>
<div class="gl" style="left:776.5px;top:459.5px;width:78.0px;height:1px"></div>
<div class="gl" style="left:776.5px;top:478.2px;width:78.0px;height:1px"></div>
<div class="gl" style="left:776.5px;top:496.8px;width:78.0px;height:1px"></div>
<div class="gl" style="left:839.0px;top:215.7px;width:1px;height:283.3px"></div>
<div style="left:839.5px;top:198px;width:1px;height:18px;background:#c4c4c4"></div>

<!-- comment mark -->
<svg style="left:201.500px;top:423px" width="6" height="6" viewBox="0 0 6 6"><path d="M0 0h6v6z" fill="#e02020"/></svg>

<!-- watermark -->
<svg style="left:600px;top:410px" width="170" height="46" viewBox="0 0 170 46">
<path d="M35 20.500A15 15 0 1 0 29.500 33.800" fill="none" stroke="#1a6e1a" stroke-width="3.600"/>
<circle cx="29.800" cy="32" r="5.800" fill="#f7941d"/>
<text x="52" y="34" font-family="'Liberation Serif','Noto Serif CJK SC',serif" font-weight="600" font-size="27" fill="#1a6e1a">办公精英</text>
</svg>

<!-- vertical scrollbar -->
<div style="left:854.5px;top:198px;width:19.5px;height:301px;background:#e6e6e6"></div>
<div style="left:854.5px;top:216px;width:1px;height:283px;background:#c2c2c2"></div>
<div style="left:857.5px;top:199.5px;width:14.5px;height:15px;background:#fff;border:1px solid #cfcfcf"></div>
<svg style="left:860.7px;top:204px" width="8" height="5" viewBox="0 0 8 5"><path d="M0 4.500l4-4 4 4z" fill="#8a8a8a"/></svg>
<div style="left:857.5px;top:214px;width:14.5px;height:75px;background:#fff;border:1px solid #cfcfcf"></div>
<div style="left:857.5px;top:290px;width:14.5px;height:194px;background:#dcdcdc"></div>
<div style="left:857.5px;top:485px;width:14.5px;height:14px;background:#fff;border:1px solid #cfcfcf"></div>
<svg style="left:860.7px;top:490px" width="8" height="5" viewBox="0 0 8 5"><path d="M0 .5l4 4 4-4z" fill="#8a8a8a"/></svg>

<!-- sheet tab bar -->
<div id="tabbar"></div>
<svg style="left:22px;top:507.500px" width="4" height="6" viewBox="0 0 4 6"><path d="M4 0L0 3l4 3z" fill="#cdcdcd"/></svg>
<svg style="left:45px;top:507.500px" width="4" height="6" viewBox="0 0 4 6"><path d="M0 0l4 3-4 3z" fill="#cdcdcd"/></svg>
<div style="left:80px;top:499px;width:65.5px;height:20.5px;background:#fff;border-bottom:2px solid #217346;border-left:1px solid #c6c6c6;border-right:1px solid #c6c6c6"></div>
<div class="t" style="left:90px;top:500px;font-size:13.500px;color:#217346;height:16px;line-height:16px">XX网络</div>
<div class="t" style="left:154px;top:500px;font-size:13.500px;color:#444;height:16px;line-height:16px">系数</div>
<div style="left:190px;top:502px;width:1px;height:15px;background:#ababab"></div>
<div class="t" style="left:199px;top:500px;font-size:13.500px;color:#444;height:16px;line-height:16px">其他</div>
<div style="left:234px;top:502px;width:1px;height:15px;background:#ababab"></div>
<svg style="left:259.700px;top:502px" width="17" height="17" viewBox="0 0 17 17"><circle cx="8.500" cy="8.500" r="7.400" fill="none" stroke="#6a6a6a" stroke-width="1.200"/><path d="M8.500 4.500v8M4.500 8.500h8" stroke="#6a6a6a" stroke-width="1.300"/></svg>
<div style="left:522px;top:505px;width:2px;height:2px;background:#aaa;box-shadow:0 4px 0 #aaa,0 8px 0 #aaa"></div>
<!-- hscroll -->
<div style="left:536px;top:503px;width:14px;height:15px;background:#fff;border:1px solid #cfcfcf"></div>
<svg style="left:540px;top:507px" width="5" height="8" viewBox="0 0 5 8"><path d="M4.500 .8l-4 3.200 4 3.200z" fill="#6a6a6a"/></svg>
<div style="left:551px;top:503px;width:270px;height:15px;background:#fff;border:1px solid #cfcfcf"></div>
<div style="left:821px;top:503px;width:20px;height:15px;background:#dcdcdc"></div>
<div style="left:842px;top:503px;width:14px;height:15px;background:#fff;border:1px solid #cfcfcf"></div>
<svg style="left:847px;top:507px" width="5" height="8" viewBox="0 0 5 8"><path d="M.5 .8l4 3.200-4 3.200z" fill="#6a6a6a"/></svg>

<!-- status bar -->
<div id="status"></div>
<div class="t" style="left:6.500px;top:526px;font-size:11px;color:#4a4a4a">就绪</div>
<div style="left:595px;top:522.5px;width:32px;height:20px;background:#cbcbcb"></div>
<svg style="left:604px;top:526px" width="14" height="12" viewBox="0 0 14 12"><path d="M.5 .5h12v11H.5zM.5 4.200h12M.5 7.800h12M4.500 .5v11M8.500 .5v11" fill="none" stroke="#555" stroke-width="1.100"/></svg>
<svg style="left:637px;top:526px" width="14" height="12" viewBox="0 0 14 12"><path d="M.5 .5h13v11H.5z" fill="none" stroke="#666" stroke-width="1"/><path d="M3.500 2.500h7v7h-7z" fill="none" stroke="#666" stroke-width="1"/><path d="M5.500 5h3v3h-3z" fill="none" stroke="#888" stroke-width="1"/></svg>
<svg style="left:670px;top:526px" width="14" height="12" viewBox="0 0 14 12"><path d="M.5 .5h13v11H.5z" fill="none" stroke="#666" stroke-width="1"/><path d="M4.500 .5v6.500h5V.5" fill="none" stroke="#666" stroke-width="1"/></svg>
<div style="left:697px;top:531px;width:8px;height:2px;background:#666"></div>
<div style="left:708px;top:531.500px;width:97px;height:1px;background:#a8a8a8"></div>
<div style="left:755px;top:526px;width:4px;height:12px;background:#555"></div>
<div style="left:808px;top:531px;width:8px;height:2px;background:#666"></div>
<div style="left:811px;top:528px;width:2px;height:8px;background:#666"></div>
<div class="t" style="left:826px;top:525px;font-size:12px;color:#444">100%</div>

<div id="leftb"></div>
</body>
</html>
